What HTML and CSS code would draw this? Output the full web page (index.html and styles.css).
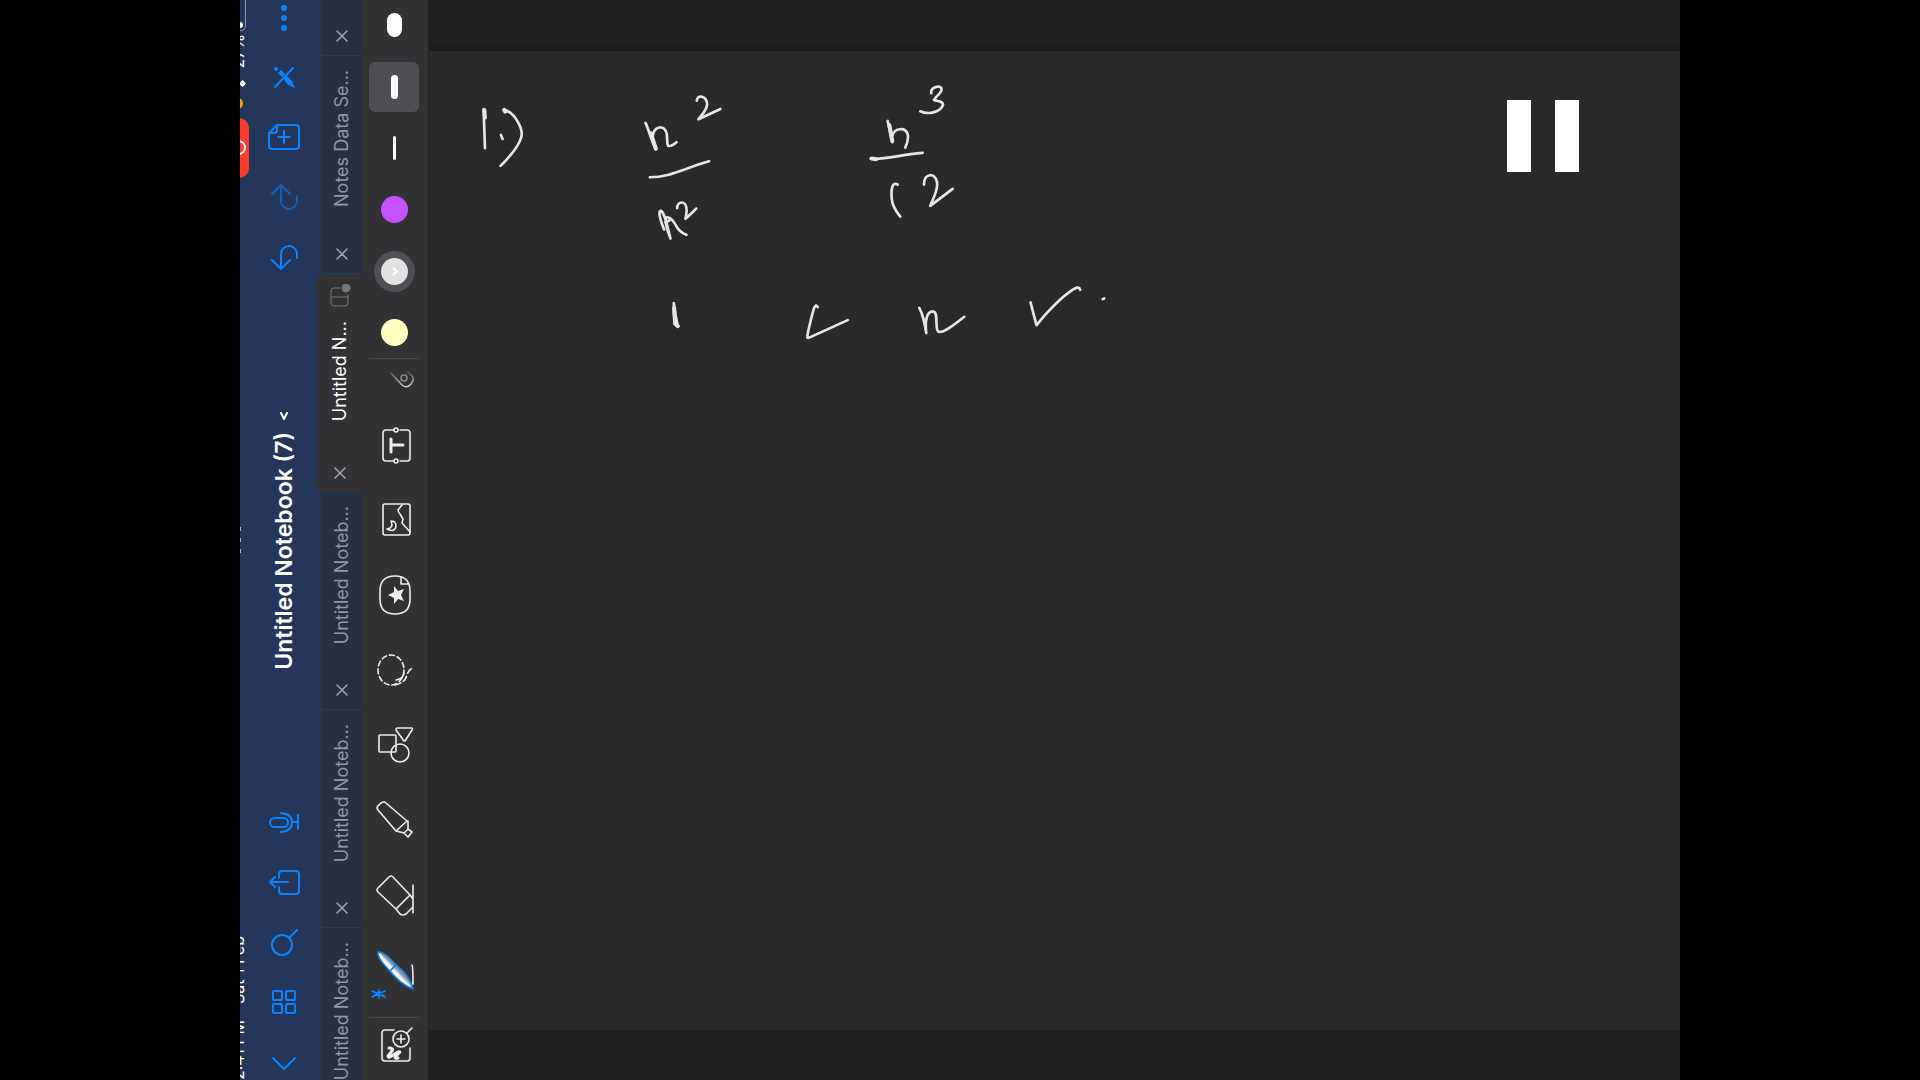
FILE: index.html
```html
<!DOCTYPE html>
<html lang="en">
<head>
<meta charset="utf-8">
<title>Untitled Notebook (7)</title>
<link rel="stylesheet" href="styles.css">
</head>
<body>
<div class="app">
  <header class="header">
    <div class="status">
      <div class="status-group">
        <span class="battery"><i class="battery-level"></i></span>
        <span class="status-text">27%</span>
        <span class="location"></span>
        <span class="mic-dot"></span>
        <span class="recording"><i class="recording-ring"></i></span>
      </div>
      <div class="multitask"><i></i><i></i><i></i></div>
      <div class="status-group clock">
        <span class="status-text">Sat 1 Feb</span>
        <span class="status-text">2:41 PM</span>
      </div>
    </div>
    <nav class="nav">
      <div class="nav-group">
        <button class="nav-button" aria-label="More"><svg viewBox="0 0 34 34"><g class="solid"><circle cx="17" cy="8" r="3"/><circle cx="17" cy="18" r="3"/><circle cx="17" cy="28" r="3"/></g></svg></button>
        <button class="nav-button" aria-label="Read only"><svg viewBox="0 0 34 34"><path d="M26 8 8 27"/><g class="solid"><circle cx="9" cy="9" r="2"/><path d="m11 13 3-3 4 4-3 3zM16 18l3-3 6 6 3 7-7-3z"/></g></svg></button>
        <button class="nav-button" aria-label="Add page"><svg viewBox="0 0 34 34"><path d="M10 5h19q3 0 3 3v18q0 3-3 3H5q-3 0-3-3V13zM10 5v5q0 3-3 3H2M17 11v12M11 17h12"/></svg></button>
        <button class="nav-button dim" aria-label="Redo"><svg viewBox="0 0 34 34"><path d="m5 14 9-9 9 9M14 6v15a8 8 0 0 0 16 0v-5"/></svg></button>
        <button class="nav-button" aria-label="Undo"><svg viewBox="0 0 34 34"><path d="m5 20 9 9 9-9M14 28V14a8 8 0 0 1 16 0v4"/></svg></button>
      </div>
      <button class="title"><svg class="caret" viewBox="0 0 12 12"><path d="m3 3 3 6 3-6"/></svg><span class="vertical">Untitled Notebook (7)</span></button>
      <div class="nav-group">
        <button class="nav-button" aria-label="Record"><svg viewBox="0 0 34 34"><rect x="3" y="12" width="18" height="9" rx="4.500"/><path d="M14 7q11 1 11 9.500T14 26M25 16h6M31 9v14"/></svg></button>
        <button class="nav-button" aria-label="Share"><svg viewBox="0 0 34 34"><path d="M12 12V8q0-3 3-3h14q3 0 3 3v17q0 3-3 3H15q-3 0-3-3v-4M21 16H3M8 11l-5 5 5 5"/></svg></button>
        <button class="nav-button" aria-label="Search"><svg viewBox="0 0 34 34"><circle cx="15" cy="19" r="10"/><path d="m22 12 8-8"/></svg></button>
        <button class="nav-button" aria-label="Thumbnails"><svg viewBox="0 0 34 34"><rect x="6" y="5" width="9" height="9" rx="1"/><rect x="19" y="5" width="9" height="9" rx="1"/><rect x="6" y="18" width="9" height="9" rx="1"/><rect x="19" y="18" width="9" height="9" rx="1"/></svg></button>
        <button class="nav-button" aria-label="Back"><svg viewBox="0 0 34 34"><path d="m6 12 11 11 11-11"/></svg></button>
      </div>
    </nav>
  </header>

  <div class="tabs">
    <div class="tab tab-first"><button class="close" aria-label="Close tab"><svg viewBox="0 0 12 12"><path d="m1 1 10 10M11 1 1 11"/></svg></button></div>
    <div class="tab"><button class="tab-label vertical">Notes Data Se...</button><button class="close" aria-label="Close tab"><svg viewBox="0 0 12 12"><path d="m1 1 10 10M11 1 1 11"/></svg></button></div>
    <div class="tab tab-active">
      <svg class="split" viewBox="0 0 22 24"><path d="M11 4H5q-3 0-3 3v12q0 3 3 3h11q3 0 3-3v-8M2 13h17"/><circle cx="17" cy="4" r="4"/></svg>
      <button class="tab-label vertical">Untitled N...</button><button class="close" aria-label="Close tab"><svg viewBox="0 0 12 12"><path d="m1 1 10 10M11 1 1 11"/></svg></button>
    </div>
    <div class="tab"><button class="tab-label vertical">Untitled Noteb...</button><button class="close" aria-label="Close tab"><svg viewBox="0 0 12 12"><path d="m1 1 10 10M11 1 1 11"/></svg></button></div>
    <div class="tab"><button class="tab-label vertical">Untitled Noteb...</button><button class="close" aria-label="Close tab"><svg viewBox="0 0 12 12"><path d="m1 1 10 10M11 1 1 11"/></svg></button></div>
    <div class="tab tab-last"><button class="tab-label vertical">Untitled Noteb...</button></div>
  </div>

  <aside class="tools">
    <div class="presets">
      <button class="tool" aria-label="Thick stroke"><i class="stroke thick"></i></button>
      <button class="tool selected" aria-label="Medium stroke"><i class="stroke medium"></i></button>
      <button class="tool" aria-label="Thin stroke"><i class="stroke thin"></i></button>
      <button class="tool" aria-label="Purple"><i class="swatch purple"></i></button>
      <button class="tool" aria-label="White"><i class="swatch white"><svg viewBox="0 0 8 8"><path d="m3 1 3 3-3 3"/></svg></i></button>
      <button class="tool" aria-label="Yellow"><i class="swatch yellow"></i></button>
    </div>
    <div class="toolset">
      <button class="tool clip" aria-label="Attachment"><svg viewBox="0 0 50 50"><defs><linearGradient id="fade" x1="0" y1="0" x2="0" y2="1"><stop offset="0" stop-color="#555557"/><stop offset="1" stop-color="#cacacc"/></linearGradient></defs><path stroke="url(#fade)" d="m22 18 11 12q5 4 9-1 4-5 1-8l-4-4"/><circle cx="35" cy="23" r="3" stroke="#88888a"/></svg></button>
      <button class="tool" aria-label="Text"><svg viewBox="0 0 50 50"><path d="M24 10h-7q-3 0-3 3v25q0 3 3 3h7M31 10h7q3 0 3 3v25q0 3-3 3h-7"/><circle cx="27" cy="10" r="2"/><circle cx="27" cy="41" r="2"/><path class="bold" d="M22 19v13M22 25h12"/></svg></button>
      <button class="tool" aria-label="Image"><svg viewBox="0 0 50 50"><rect x="14" y="9" width="27" height="31" rx="2"/><path d="m33 10-4 5q0 2 2 4l3 5-1 4 8 9M18 34q8 4 9-3 0-5-5-5 3 7-4 8z"/></svg></button>
      <button class="tool" aria-label="Stickers"><svg viewBox="0 0 50 50"><path d="M26 6q-15 0-15 15v8q0 15 15 15t15-15v-8q0-15-15-15M32 7v7h8"/><path class="fill" d="m19 25 6-3V16l4 5 6-2-3 6 3 6-6-2-4 5v-6z"/></svg></button>
      <button class="tool" aria-label="Lasso"><svg viewBox="0 0 50 50"><ellipse cx="22" cy="25" rx="13" ry="15" stroke-dasharray="5 3"/><path stroke-dasharray="6 3" d="M26 40q10-2 12-10 2-6 6-7"/><path d="M27 35q6-1 8-6"/></svg></button>
      <button class="tool" aria-label="Shapes"><svg viewBox="0 0 50 50"><rect x="10" y="15" width="17" height="17" rx="1"/><circle cx="31" cy="33" r="9"/><path d="M28 8h15q1 1 0 2l-7 11h-1L27 10q0-2 1-2z"/></svg></button>
      <button class="tool" aria-label="Highlighter"><svg viewBox="0 0 50 50"><path d="m12 8-3 3q-2 2 0 4l18 21L38 26 17 8q-2-2-5 0zM39 26v8l-4 4-8-2M39 34l4 3-4 5-4-4"/></svg></button>
      <button class="tool" aria-label="Eraser"><svg viewBox="0 0 50 50"><path d="M20 7 9 18q-2 2 0 4l18 17 14-14L24 7q-2-2-4 0zM27 39l4 5q3 2 6 0l7-7M41 25l3 4M44 15v28"/></svg></button>
      <button class="tool" aria-label="Pen"><svg viewBox="0 0 50 50"><defs><linearGradient id="barrel" x1="0" y1="1" x2="1" y2="0"><stop offset=".48" stop-color="#f4f6f8"/><stop offset=".56" stop-color="#8d979f"/></linearGradient></defs><path d="M43 20q1 2 1 19h-5"/><g fill="url(#barrel)" stroke="#1482e8"><path d="M9 7q6-1 18 13l-6 6Q8 13 9 7z"/><path d="M27 20q14 11 17 24-13-5-23-18z"/></g><path stroke="#0a84ff" d="m3 46 13 6m-13 0 13-6m-13 6 7-6M16 52l-6-6M10 45v8"/></svg></button>
    </div>
    <button class="tool" aria-label="Zoom window"><svg viewBox="0 0 50 50"><path d="M25 10h-9q-3 0-3 3v25q0 3 3 3h22q3 0 3-3V28"/><circle cx="32" cy="19" r="8"/><path d="m38 13 5-5M32 15v8M28 19h8"/><path class="bold" d="M20 28q5 0 3 3l-4 5q0 2 2 1l8-5q3-1 1 1l-4 4q0 2 3 1"/></svg></button>
  </aside>

  <main class="canvas">
    <button class="pause" aria-label="Pause"><i></i><i></i></button>
    <section class="page">
      <svg class="ink" viewBox="428 51 1252 700" preserveAspectRatio="xMinYMin meet" role="img" aria-label="1.) n²/n², n³/12, 1 &lt; n ✓">
        <g transform="translate(450 70) scale(.333333)">
          <path d="M98 118 102 235M150 195l5 12M158 119c35 8 60 60 53 83-8 30-38 62-62 86M584 159c10 20 16 50 31 79M605 205c2-40 37-42 43-13 2 20 0 37 6 36 8 2 15-4 23-11M738 92c2-20 29-14 31 10 0 18-14 30-26 46l66-31M597 322c60 0 95-24 178-48M640 479c-9-20-20-56-10-56 12 4 20 50 29 83-9-25-19-53-12-63 12-5 25 17 32 30 8 12 17 18 28 22M643 457c10-2 15-6 14-12M679 415c0-22 26-24 28 0 2 16-2 22-3 32 10-10 20-18 32-31M669 700c0 24 1 42 3 62l9 9-7-36-5-35"/>
          <path class="heavy" d="m100 120 2 23M600 190l15 46M670 715l3 46 8 8M160 120l3 5"/>
        </g>
        <g transform="translate(770 70) scale(.333333)">
          <path d="M482 70c-3-20 30-26 31-13 1 12-18 22-23 33 12 4 30 5 27 15-6 20-42 31-68 19M351 153l14 64M366 196c5-20 37-27 45-4 4 15-2 30-7 41M300 266c44 4 80-10 156-17M381 344c-14-7-20 5-18 39 1 27 15 44 26 57M460 344c0-35 33-37 39-8 5 25-12 49-20 72l67-51M141 712c-9-18-15 16-28 70-5 24-5 25 6 20l112-51M446 714c12 21 17 50 21 76-4-36 0-65 21-65 17 2 3 56 16 61 16 5 52-26 77-45M780 698l18 68c30-40 78-86 110-107 12-9 20-6 21 1M997 688l4-2"/>
          <path class="heavy" d="m356 165 9 48M303 266l14 2"/>
        </g>
      </svg>
    </section>
  </main>
</div>
</body>
</html>
```
FILE: styles.css
```css
* {
  box-sizing: border-box;
}

body {
  margin: 0;
  padding: 0 12.5%;
  background: #000;
  color: #fff;
  font-family: Inter, "Liberation Sans", sans-serif;
}

button {
  padding: 0;
  border: 0;
  background: none;
  color: inherit;
  font: inherit;
}

svg {
  display: block;
  fill: none;
  stroke: currentColor;
  stroke-width: 2;
  stroke-linecap: round;
  stroke-linejoin: round;
}

i {
  display: block;
}

.vertical,
.status-text {
  writing-mode: vertical-rl;
  transform: rotate(180deg);
  white-space: nowrap;
}

.app {
  display: flex;
  height: 100vh;
  overflow: hidden;
}

/* Header */
.header {
  display: flex;
  flex: none;
  width: 81px;
  background: #24375b;
}

.status {
  display: flex;
  flex-direction: column;
  justify-content: space-between;
  width: 9px;
  overflow: hidden;
}

.status-group {
  display: flex;
  flex-direction: column;
  align-items: flex-end;
  height: 180px;
}

.clock {
  justify-content: flex-end;
  gap: 16px;
}

.status-text {
  margin-right: 1px;
  font-size: 16px;
  line-height: 20px;
}

.battery {
  width: 24px;
  height: 31px;
  margin: 0 3px 3px 0;
  padding: 22px 2px 0 0;
  border: 1px solid #8b97ae;
  border-top: 0;
  border-radius: 0 0 5px 5px;
}

.battery-level {
  height: 6px;
  border-radius: 3px;
  background: #fff;
}

.location {
  width: 5px;
  height: 5px;
  margin: 12px 4px 12px 0;
  background: #fff;
  transform: rotate(45deg);
}

.mic-dot {
  width: 11px;
  height: 11px;
  margin: 0 6px 9px 0;
  border-radius: 50%;
  background: #ff9f0a;
}

.recording {
  display: flex;
  flex: none;
  align-items: center;
  justify-content: flex-end;
  width: 30px;
  height: 60px;
  padding-right: 3px;
  border-radius: 10px;
  background: #ff3b30;
}

.recording-ring {
  width: 15px;
  height: 15px;
  border: 2px solid #fff;
  border-radius: 50%;
}

.multitask {
  display: flex;
  flex-direction: column;
  gap: 7px;
}

.multitask i {
  width: 1px;
  height: 4px;
  background: #a9b6cf;
}

.nav {
  display: flex;
  flex-direction: column;
  align-items: center;
  justify-content: space-between;
  width: 70px;
  color: #0a84ff;
}

.nav-group {
  display: flex;
  flex-direction: column;
  gap: 26px;
}

.nav-button {
  width: 34px;
  height: 34px;
}

.solid {
  fill: currentColor;
  stroke: none;
}

.dim {
  color: #1760b1;
}

.title {
  display: flex;
  flex-direction: column;
  align-items: center;
  gap: 10px;
  color: #fff;
  font-size: 23px;
  font-weight: 600;
  line-height: 28px;
}

.caret {
  width: 12px;
  height: 12px;
}

/* Tabs */
.tabs {
  display: flex;
  flex: none;
  flex-direction: column;
  width: 41px;
  background: #253042;
  color: #8f98a6;
  font-size: 18px;
  line-height: 24px;
}

.tab {
  display: flex;
  flex: none;
  flex-direction: column;
  align-items: center;
  justify-content: space-between;
  height: 218px;
  padding: 14px 0 13px;
  border-bottom: 1px solid #263c5c;
}

.tab-first {
  justify-content: flex-end;
  height: 56px;
}

.tab-last {
  flex: 1;
  border: 0;
}

.tab-active {
  position: relative;
  width: 45px;
  margin-left: -4px;
  padding-top: 10px;
  border: 0;
  border-radius: 6px 0 0 6px;
  background: #323234;
  color: #fff;
}

.tab-active .tab-label {
  margin-bottom: 32px;
}

.close {
  width: 12px;
  height: 12px;
  color: #a0a6b0;
}

.close svg {
  stroke-width: 1.5;
}

.split {
  width: 22px;
  height: 24px;
  color: #77777a;
  stroke-width: 1;
}

.split circle {
  fill: currentColor;
}

/* Tools */
.tools {
  display: flex;
  flex: none;
  flex-direction: column;
  align-items: center;
  width: 67px;
  padding-right: 2px;
  border-right: 1px solid #202021;
  background: #323234;
  color: #ededed;
}

.presets {
  display: flex;
  flex-direction: column;
  justify-content: space-between;
  height: 358px;
}

.toolset {
  display: flex;
  flex-direction: column;
  gap: 25px;
  margin-bottom: 2px;
  padding-bottom: 22px;
  border-top: 1px solid #48484a;
  border-bottom: 1px solid #48484a;
}

.tool {
  display: flex;
  flex: none;
  align-items: center;
  justify-content: center;
  width: 50px;
  height: 50px;
  border-radius: 6px;
}

.tool svg {
  width: 100%;
  overflow: visible;
  stroke-width: 1.6;
}

.tool .bold {
  stroke-width: 3;
}

.tool .fill {
  fill: currentColor;
  stroke: none;
}

.clip {
  height: 42px;
  margin-bottom: -6px;
}

.selected {
  background: #4f4f53;
}

.stroke {
  height: 24px;
  border-radius: 8px;
  background: #fff;
}

.thick {
  width: 15px;
}

.medium {
  width: 7px;
}

.thin {
  width: 3px;
}

.swatch {
  width: 27px;
  height: 27px;
  border-radius: 50%;
}

.purple {
  background: #c651ff;
}

.white {
  padding: 9px;
  background: #e2e2e2;
  box-shadow: 0 0 0 7px #505054;
  color: #fff;
}

.yellow {
  background: #ffffc2;
}

/* Canvas */
.canvas {
  position: relative;
  flex: 1;
  padding: 51px 0 50px;
  background: linear-gradient(#202022 40px, #1a1a1b 51px, #202022 60px);
}

.page {
  height: 100%;
  background: #292929;
}

.ink {
  width: 100%;
  color: #e6e6e6;
  stroke-width: 8;
}

.ink .heavy {
  stroke-width: 12;
}

.pause {
  position: absolute;
  top: 100px;
  right: 101px;
  display: flex;
  gap: 24px;
}

.pause i {
  width: 24px;
  height: 72px;
  background: #fff;
}
```
